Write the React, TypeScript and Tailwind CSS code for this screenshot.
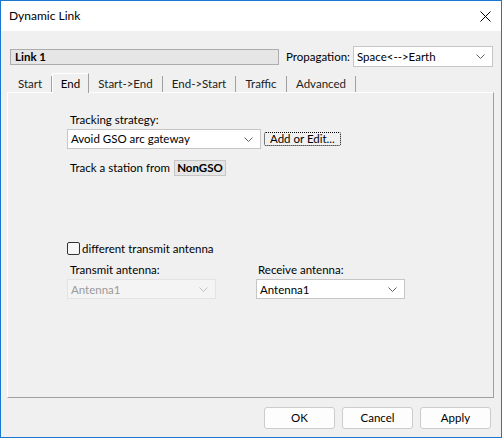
import React from 'react';

const font = { fontFamily: 'Lato, "Noto Sans", sans-serif' };

function Chevron({ color = '#606060' }: { color?: string }) {
  return (
    <svg width="9" height="5" viewBox="0 0 9 5" className="shrink-0">
      <path d="M0.5 0.5 L4.5 4.5 L8.5 0.5" fill="none" stroke={color} strokeWidth="1" />
    </svg>
  );
}

function Combo({ value, className = '', disabled = false }: { value: string; className?: string; disabled?: boolean }) {
  return (
    <div
      className={
        'flex items-center justify-between h-[20px] pl-[3px] pr-[7px] border whitespace-nowrap ' +
        (disabled ? 'bg-[#f4f4f4] border-[#e3e3e3] text-[#9a9a9a] ' : 'bg-white border-[#c6c6c6] text-black ') +
        className
      }
    >
      <span className="leading-none">{value}</span>
      <Chevron color={disabled ? '#c0c0c0' : '#606060'} />
    </div>
  );
}

const tabs = [
  { label: 'Start', w: 'w-[43px]' },
  { label: 'End', w: 'w-[37px]', active: true },
  { label: 'Start->End', w: 'w-[74px]' },
  { label: 'End->Start', w: 'w-[73px]' },
  { label: 'Traffic', w: 'w-[51px]' },
  { label: 'Advanced', w: 'w-[69px]' },
];

export default function App() {
  return (
    <div style={font} className="w-[502px] h-[438px] border border-[#1a76cf] flex flex-col text-[11.5px] text-black bg-[#f0f0f0] overflow-hidden whitespace-nowrap">
      {/* title bar */}
      <div className="h-[30px] bg-white flex items-center justify-between shrink-0">
        <span className="ml-[8px] text-[12px]">Dynamic Link</span>
        <svg width="11" height="11" viewBox="0 0 11 11" className="mr-[10px]">
          <path d="M0.5 0.5 L10.5 10.5 M10.5 0.5 L0.5 10.5" stroke="#000" strokeWidth="1" />
        </svg>
      </div>

      {/* header row */}
      <div className="flex items-center h-[21px] mt-[15px]">
        <div className="ml-[9px] w-[269px] h-[16px] bg-[#e6e6e6] border border-[#adadad] flex items-center pl-[4px] font-bold leading-none">
          Link 1
        </div>
        <span className="ml-[7px]">Propagation:</span>
        <Combo value="Space<-->Earth" className="ml-auto mr-[8px] w-[140px] h-[21px]" />
      </div>

      {/* tabs */}
      <div className="flex mt-[6px] ml-[8px] h-[19px] items-end">
        {tabs.map((t) =>
          t.active ? (
            <div key={t.label} className={t.w + ' h-[20px] -mb-px relative z-10 bg-[#f0f0f0] border-l border-t border-white border-r border-r-[#a0a0a0] flex items-center justify-center'}>
              {t.label}
            </div>
          ) : (
            <div key={t.label} className={t.w + ' h-[16px] border-r border-[#a0a0a0] flex items-center justify-center text-[#222]'}>
              {t.label}
            </div>
          )
        )}
      </div>

      {/* panel */}
      <div className="ml-[6px] w-[487px] h-[306px] border-t border-l border-white border-r border-b border-r-[#a0a0a0] border-b-[#a0a0a0] pl-[59px] pt-[19px]">
        <div className="pl-[3px] leading-[16px]">Tracking strategy:</div>
        <div className="flex items-center mt-[1px]">
          <Combo value="Avoid GSO arc gateway" className="w-[194px]" />
          <div className="ml-[3px] w-[77px] h-[14px] border border-dotted border-black rounded-[2px] bg-[#f0f0f0] flex items-center pl-[5px] leading-none">
            Add or Edit...
          </div>
        </div>
        <div className="flex items-center mt-[10px]">
          <span className="ml-[3px]">Track a station from</span>
          <span className="ml-[4px] h-[16px] w-[52px] bg-[#e6e6e6] border border-[#c6c6c6] flex items-center justify-center font-bold leading-none">
            NonGSO
          </span>
        </div>

        <div className="flex items-center mt-[66px]">
          <div className="w-[13px] h-[13px] border border-[#333] rounded-[2px] bg-[#f7f7f7]" />
          <span className="ml-[2px] leading-none">different transmit antenna</span>
        </div>

        <div className="flex mt-[7px] gap-[40px]">
          <div className="w-[149px]">
            <div className="pl-[3px] leading-[16px]">Transmit antenna:</div>
            <Combo value="Antenna1" disabled className="mt-[1px] w-[149px]" />
          </div>
          <div className="w-[149px]">
            <div className="pl-[2px] leading-[16px]">Receive antenna:</div>
            <Combo value="Antenna1" className="mt-[1px] w-[149px]" />
          </div>
        </div>
      </div>

      {/* buttons */}
      <div className="flex justify-end gap-[7px] mt-[9px] mr-[10px]">
        {['OK', 'Cancel', 'Apply'].map((b) => (
          <div key={b} className="w-[71px] h-[22px] bg-[#fdfdfd] border border-[#cccccc] rounded-[3px] flex items-center justify-center">
            {b}
          </div>
        ))}
      </div>
    </div>
  );
}
